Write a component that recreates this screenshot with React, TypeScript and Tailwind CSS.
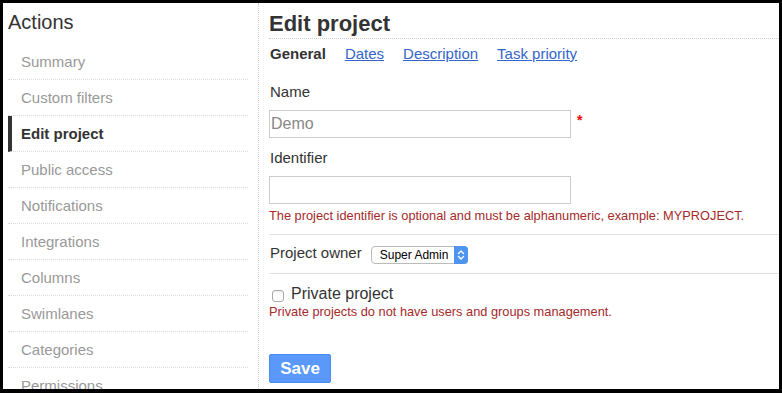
import React from "react";

const items = [
  "Summary",
  "Custom filters",
  "Edit project",
  "Public access",
  "Notifications",
  "Integrations",
  "Columns",
  "Swimlanes",
  "Categories",
  "Permissions",
];

export default function App() {
  return (
    <div
      className="h-[393px] w-[782px] overflow-hidden box-border border-t-[3px] border-l-[3px] border-r-[3px] border-b-[4px] border-black bg-white flex text-[#333]"
      style={{ fontFamily: '"Liberation Sans", Arial, sans-serif' }}
    >
      {/* Sidebar */}
      <div className="ml-[5px] w-[240px] shrink-0">
        <h2 className="mt-[7px] text-[20px] leading-[24px] font-normal text-[#333]">Actions</h2>
        <ul className="mt-[10px]">
          {items.map((it) => {
            const active = it === "Edit project";
            return (
              <li
                key={it}
                className={
                  "pt-[1px] h-[36px] border-b border-dotted border-[#ddd] text-[15px] leading-[33px] " +
                  (active
                    ? "border-l-4 border-l-[#333] pl-[9px] font-bold text-[#333]"
                    : "pl-[13px] text-[#999]")
                }
                style={active ? { borderLeftStyle: "solid" } : undefined}
              >
                {it}
              </li>
            );
          })}
        </ul>
      </div>

      {/* Main */}
      <div className="ml-[10px] flex-1 border-l border-dotted border-[#ccc] pl-[10px]">
        <div className="mt-[9px] pb-[2px] border-b border-dotted border-[#ccc]">
          <h2 className="text-[22px] leading-[24px] font-bold text-[#333]">Edit project</h2>
        </div>
        <div className="mt-[5px] flex gap-[19px] text-[15px] leading-[20px]">
          <span className="font-bold ml-[1px]">General</span>
          <a className="text-[#3366cc] underline">Dates</a>
          <a className="text-[#3366cc] underline">Description</a>
          <a className="text-[#3366cc] underline">Task priority</a>
        </div>

        <div className="mt-[18px] text-[15px] leading-[20px] ml-[1px]">Name</div>
        <div className="mt-[8px] flex items-start">
          <div className="w-[302px] h-[28px] border border-[#ccc] text-[16px] leading-[26px] pl-[1px] text-[#888]">
            Demo
          </div>
          <span className="ml-[6px] mt-[2px] text-[14px] leading-[16px] font-bold text-[#f00]">*</span>
        </div>

        <div className="mt-[10px] text-[15px] leading-[20px] ml-[1px]">Identifier</div>
        <div className="mt-[8px] w-[302px] h-[28px] border border-[#ccc]"></div>
        <div className="mt-[4px] text-[12.8px] leading-[16px] text-[#a52a2a]">
          The project identifier is optional and must be alphanumeric, example: MYPROJECT.
        </div>

        <div className="mt-[10px] h-px bg-[#e2e2e2]"></div>

        <div className="mt-[8px] flex items-start h-[20px]">
          <span className="text-[15px] leading-[20px] ml-[1px]">Project owner</span>
          <div className="ml-[9px] mt-[3px] w-[97px] h-[18px] flex items-stretch rounded-[4px] border border-[#bbb] bg-white">
            <span className="flex-1 pl-[8px] text-[12px] leading-[16px] text-black">Super Admin</span>
            <span className="w-[14px] -my-px -mr-px rounded-r-[4px] bg-[#4f95f0] flex items-center justify-center">
              <svg width="8" height="12" viewBox="0 0 8 12" fill="none" stroke="white" strokeWidth="1.4" strokeLinecap="round" strokeLinejoin="round">
                <path d="M1.5 4.5 L4 2 L6.5 4.5" />
                <path d="M1.5 7.5 L4 10 L6.5 7.5" />
              </svg>
            </span>
          </div>
        </div>

        <div className="mt-[10px] h-px bg-[#e2e2e2]"></div>

        <div className="mt-[10px] flex items-start h-[20px]">
          <span className="ml-[3px] mt-[6px] w-[12px] h-[12px] rounded-[3px] border border-[#aaa] bg-white shadow-[inset_0_1px_1px_rgba(0,0,0,0.08)]"></span>
          <span className="ml-[7px] text-[16px] leading-[20px]">Private project</span>
        </div>
        <div className="text-[12.8px] leading-[16px] text-[#a52a2a]">
          Private projects do not have users and groups management.
        </div>

        <button className="mt-[34px] w-[62px] h-[29px] rounded-[2px] border border-[#4a8bf0] bg-[#5a99fa] text-white font-bold text-[17px] leading-[27px] text-center">
          Save
        </button>
      </div>
    </div>
  );
}
